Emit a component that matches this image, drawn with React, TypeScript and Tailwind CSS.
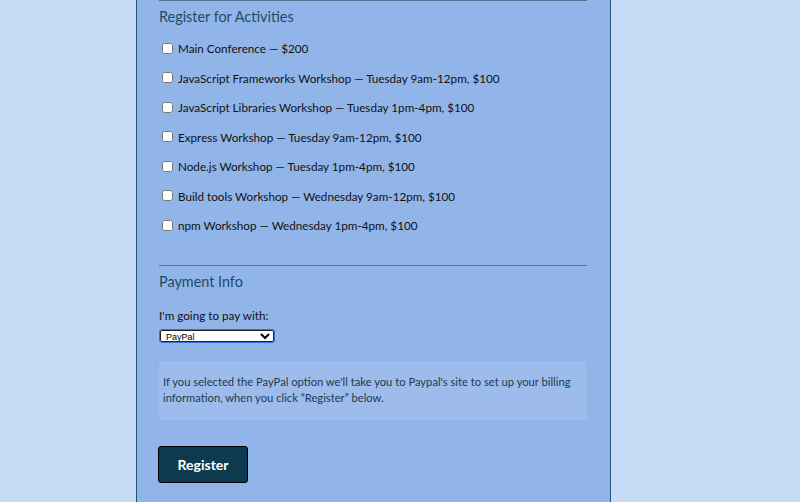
const activities = [
  "Main Conference — $200",
  "JavaScript Frameworks Workshop — Tuesday 9am-12pm, $100",
  "JavaScript Libraries Workshop — Tuesday 1pm-4pm, $100",
  "Express Workshop — Tuesday 9am-12pm, $100",
  "Node.js Workshop — Tuesday 1pm-4pm, $100",
  "Build tools Workshop — Wednesday 9am-12pm, $100",
  "npm Workshop — Wednesday 1pm-4pm, $100",
];

export default function App() {
  return (
    <div
      className="min-h-[502px] h-[502px] overflow-hidden bg-[#c6dcf6] flex justify-center"
      style={{ fontFamily: "Lato, 'Open Sans', sans-serif" }}
    >
      <div className="w-[475px] ml-[-53px] h-full bg-[#92b5e9] border-x border-[#1f5576] pl-[22px] pr-[23px]">
        <fieldset className="border-t border-[#4f7390] pt-[6px]">
          <h2 className="text-[14.4px] leading-[19px] text-[#1e4c66]">Register for Activities</h2>
          <div className="mt-[13px] flex flex-col gap-[11px]">
            {activities.map((a) => (
              <label key={a} className="flex items-center text-[11.7px] leading-[18.5px] text-[#111] gap-[5px]">
                <input type="checkbox" className="w-[11px] h-[11px] m-0 ml-[3px]" />
                {a}
              </label>
            ))}
          </div>
        </fieldset>

        <fieldset className="border-t border-[#4f7390] mt-[30px] pt-[6px]">
          <h2 className="text-[14.4px] leading-[19px] text-[#1e4c66]">Payment Info</h2>
          <p className="mt-[15px] text-[11.7px] leading-[18px] text-[#111]">I'm going to pay with:</p>
          <select
            defaultValue="paypal"
            className="block mt-[6px] ml-[1px] w-[114px] h-[12px] p-0 pl-[1px] text-[9px] bg-white border border-[#222] rounded-[2px] outline outline-1 outline-[#3b6fd9] text-black"
            style={{ fontFamily: "'Liberation Sans', Arial, sans-serif" }}
          >
            <option value="paypal">PayPal</option>
          </select>
          <div className="mt-[19px] bg-[#9dbcec] rounded-[4px] pl-[4px] pr-[2px] pt-[13px] pb-[14px] text-[11.2px] leading-[16px] text-[#1a3b52]">
            If you selected the PayPal option we'll take you to Paypal's site to set up your billing information,
            when you click “Register” below.
          </div>
        </fieldset>

        <button className="mt-[26px] ml-[-1px] w-[90px] h-[37px] bg-[#0e3a4f] border border-black rounded-[3px] text-white text-[14px] font-bold">
          Register
        </button>
      </div>
    </div>
  );
}
